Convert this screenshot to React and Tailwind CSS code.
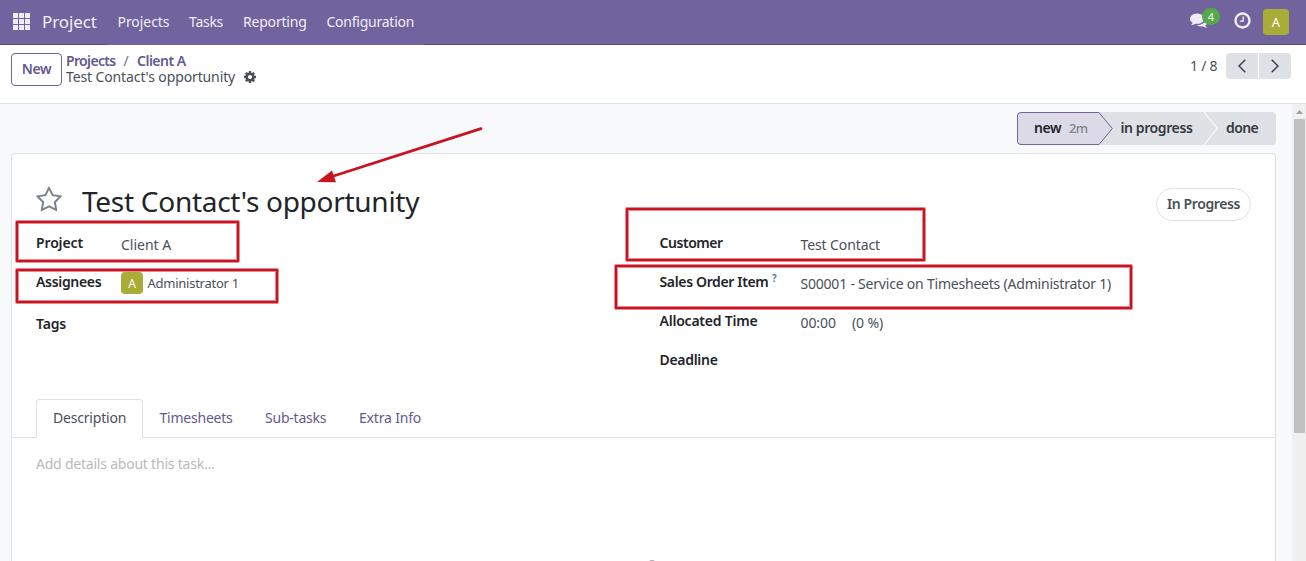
const PATHS = {
  comments:
    "M1408 768q0 139-94 257t-256.500 186.500-353.500 68.500q-86 0-176-16-124 88-278 128-36 9-86 16h-3q-11 0-20.500-8t-11.500-21q-1-3-1-6.500t.5-6.500 2-6l2.500-5 3.500-5.500 4-5 4.500-5 4-4.500q5-6 23-25t26-29.500 22.500-29 25-38.500 20.500-44q-124-72-195-177t-71-224q0-139 94-257t256.500-186.500 353.500-68.500 353.500 68.500 256.500 186.500 94 257zm384 256q0 120-71 224.500t-195 176.500q10 24 20.500 44t25 38.500 22.500 29 26 29.500 23 25q1 1 4 4.500t4.500 5 4 5 3.500 5.500l2.500 5 2 6 .5 6.500-1 6.500q-3 14-13 22t-22 7q-50-7-86-16-154-40-278-128-90 16-176 16-271 0-472-132 58 4 88 4 161 0 309-45t264-129q125-92 192-212t67-254q0-77-23-152 129 71 204 178t75 230z",
  clock:
    "M1024 544v448q0 14-9 23t-23 9h-320q-14 0-23-9t-9-23v-64q0-14 9-23t23-9h224v-352q0-14 9-23t23-9h64q14 0 23 9t9 23zm416 352q0-148-73-273t-198-198-273-73-273 73-198 198-73 273 73 273 198 198 273 73 273-73 198-198 73-273zm224 0q0 209-103 385.500t-279.500 279.500-385.500 103-385.500-103-279.500-279.500-103-385.500 103-385.500 279.500-279.500 385.500-103 385.500 103 279.500 279.500 103 385.500z",
  cog: "M1152 896q0-106-75-181t-181-75-181 75-75 181 75 181 181 75 181-75 75-181zm512-109v222q0 12-8 23t-20 13l-185 28q-19 54-39 91 35 50 107 138 10 12 10 25t-9 23q-27 37-99 108t-94 71q-12 0-26-9l-138-108q-44 23-91 38-16 136-29 186-7 28-36 28h-222q-14 0-24.500-8.500t-11.500-21.500l-28-184q-49-16-90-37l-141 107q-10 9-25 9-14 0-25-11-126-114-165-168-7-10-7-23 0-12 8-23 15-21 51-66.500t54-70.500q-27-50-41-99l-183-27q-13-2-21-12.500t-8-23.500v-222q0-12 8-23t19-13l186-28q14-46 39-92-40-57-107-138-10-12-10-24 0-10 9-23 26-36 98.500-107.500t94.500-71.500q13 0 26 10l138 107q44-23 91-38 16-136 29-186 7-28 36-28h222q14 0 24.500 8.500t11.500 21.500l28 184q49 16 90 37l142-107q9-9 24-9 13 0 25 10 129 119 165 170 7 8 7 22 0 12-8 23-15 21-51 66.500t-54 70.500q26 50 41 98l183 28q13 2 21 12.500t8 23.500z",
  star: "M1201 1004l306-297-422-62-189-382-189 382-422 62 306 297-73 421 378-199 377 199zm527-357q0 22-26 48l-363 354 86 500q1 7 1 20 0 50-41 50-19 0-40-12l-449-236-449 236q-22 12-40 12-21 0-31.500-14.500t-10.500-35.500q0-6 2-20l86-500-364-354q-25-27-25-48 0-37 56-46l502-73 225-455q19-41 49-41t49 41l225 455 502 73q56 9 56 46z",
};

function Icon({ name, className }) {
  return (
    <svg viewBox="0 0 1792 1792" fill="currentColor" className={`shrink-0 ${className}`}>
      <path d={PATHS[name]} />
    </svg>
  );
}

function AppsIcon() {
  return (
    <svg viewBox="0 0 17 17" fill="currentColor" className="size-[17px] shrink-0">
      {[0, 6, 12].map((y) => [0, 6, 12].map((x) => <rect key={`${x}-${y}`} x={x} y={y} width="5" height="5" />))}
    </svg>
  );
}

function Navbar() {
  return (
    <header className="flex h-[45px] shrink-0 items-start border-b border-[#5a4f7f] bg-[#71639e] pl-[13px] pr-[17px] text-[#f0eef5]">
      <div className="mt-[13px]">
        <AppsIcon />
      </div>
      <span className="ml-3 mt-[10px] w-[66px] text-[17px] leading-6 tracking-[-0.1px]">Project</span>
      <nav className="-mb-px flex h-[45px] gap-[20px] bg-[#71639e] pl-[9.5px] pr-[10px] pt-[11px]">
        <span className="w-[51.5px] tracking-[-0.05px]">Projects</span>
        <span className="w-[34px] tracking-[-0.28px]">Tasks</span>
        <span className="w-[63.500px] tracking-[-0.2px]">Reporting</span>
        <span className="w-[87px] tracking-[-0.24px]">Configuration</span>
      </nav>
      <div className="relative ml-auto mt-[11px]">
        <Icon name="comments" className="size-[18px]" />
        <span className="absolute -top-[3px] left-[12px] flex h-[17px] w-[18px] items-center justify-center rounded-full bg-[#55a947] text-[11px] leading-none text-white">
          4
        </span>
      </div>
      <Icon name="clock" className="ml-[25px] mt-[11px] size-[19px]" />
      <span className="ml-[11px] mt-[9px] flex size-[26px] items-center justify-center rounded-[4px] bg-[#a9ac36] text-[13px] text-white">
        A
      </span>
    </header>
  );
}

function ControlPanel() {
  return (
    <div className="flex h-[59px] shrink-0 items-start border-b border-[#dee2e6] bg-white pl-[11px] pr-[15px]">
      <button className="mt-2 flex h-[33px] w-[51px] items-center justify-center rounded-[4px] border border-[#71639e] pb-0.5 font-semibold tracking-[-0.4px] text-[#66598f]">
        New
      </button>
      <div className="ml-1 mt-2 flex flex-col leading-4">
        <div className="flex items-start font-semibold text-[#66598f]">
          <span className="w-[57.5px] tracking-[-0.65px]">Projects</span>
          <span className="w-[13.5px] font-normal text-[#6c757d]">/</span>
          <span className="tracking-[-0.5px]">Client A</span>
        </div>
        <div className="flex items-start text-[#495057]">
          <span className="w-[176.500px] tracking-[-0.12px]">Test Contact's opportunity</span>
          <Icon name="cog" className="mt-px size-[14px] text-[#495057]" />
        </div>
      </div>
      <span className="ml-auto mt-[10px] w-9 tracking-[-0.25px] text-[#495057]">1 / 8</span>
      <div className="mt-2 flex gap-px text-[#374151]">
        <button className="flex h-[26px] w-8 items-center justify-center rounded-l-[4px] bg-[#dee2e6]">
          <svg viewBox="0 0 8 14" className="h-[14px] w-2" fill="none" stroke="currentColor" strokeWidth="1.5">
            <path d="M7.300 .7 1 7l6.300 6.300" />
          </svg>
        </button>
        <button className="flex h-[26px] w-8 items-center justify-center rounded-r-[4px] bg-[#dee2e6]">
          <svg viewBox="0 0 8 14" className="h-[14px] w-2" fill="none" stroke="currentColor" strokeWidth="1.5">
            <path d="M.7 .7 7 7 .7 13.300" />
          </svg>
        </button>
      </div>
    </div>
  );
}

function StatusBar() {
  return (
    <div className="ml-auto flex h-[33px] w-[259px] overflow-hidden rounded-[4px] bg-[#dee2e6] font-semibold text-[#343a40]">
      <div className="flex w-[82px] items-start rounded-l-[4px] border-y border-l border-[#71639e] bg-[#dddae8] pl-4 pt-1 text-[#212529]">
        <span className="w-[35px] tracking-[-0.38px]">new</span>
        <span className="pt-px text-[13px] font-medium tracking-[-0.7px] text-[#7d848b]">2m</span>
      </div>
      <svg viewBox="0 0 14 33" className="h-[33px] w-[14px]">
        <path d="M0 0 13.500 16.500 0 33z" fill="#dddae8" />
        <path d="M-.5.5H0L13.300 16.500 0 32.500H-.5" fill="none" stroke="#71639e" />
      </svg>
      <span className="w-[91px] pl-[7.500px] pt-[5px] tracking-[-0.4px]">in progress</span>
      <svg viewBox="0 0 14 33" className="h-[33px] w-[14px]">
        <path d="M0 0 13.300 16.500 0 33" fill="none" stroke="#f8f9fa" strokeWidth="1.2" />
      </svg>
      <span className="pl-2 pt-[5px] tracking-[-0.6px]">done</span>
    </div>
  );
}

const label = "shrink-0 font-semibold text-[#212529]";
const value = "mt-[2px] text-[#495057]";

function TaskFields() {
  return (
    <div className="flex pl-6 pt-[9px]">
      <div className="w-[623.5px]">
        <div className="flex h-[39px]">
          <span className={`${label} w-[85px] tracking-[-0.14px]`}>Project</span>
          <span className={value}>Client A</span>
        </div>
        <div className="flex h-[42px]">
          <span className={`${label} w-[85px] tracking-[-0.32px]`}>Assignees</span>
          <span className="mt-px flex size-[22px] items-center justify-center rounded-[4px] bg-[#a9ac36] text-[12px] text-white">
            A
          </span>
          <span className="ml-[4.500px] mt-[2px] text-[13px] tracking-[-0.25px] text-[#495057]">Administrator 1</span>
        </div>
        <span className={`${label} tracking-[-0.2px]`}>Tags</span>
      </div>
      <div>
        <div className="flex h-[39px]">
          <span className={`${label} w-[141px] tracking-[-0.45px]`}>Customer</span>
          <span className={`${value} tracking-[-0.1px]`}>Test Contact</span>
        </div>
        <div className="flex h-[39px]">
          <span className={`${label} w-[112.500px] tracking-[-0.35px]`}>Sales Order Item</span>
          <span className="-mt-px w-[28.500px] text-[10px] font-semibold leading-4 text-[#1b7fa6]">?</span>
          <span className={`${value} tracking-[-0.21px]`}>S00001 - Service on Timesheets (Administrator 1)</span>
        </div>
        <div className="flex h-[39px]">
          <span className={`${label} w-[141px] tracking-[-0.22px]`}>Allocated Time</span>
          <span className={`${value} w-[51.500px] tracking-[-0.1px]`}>00:00</span>
          <span className={`${value} tracking-[-0.1px]`}>(0 %)</span>
        </div>
        <span className={`${label} tracking-[-0.3px]`}>Deadline</span>
      </div>
    </div>
  );
}

function Notebook() {
  return (
    <>
      <div className="mt-[29px] flex border-b border-[#dee2e6] pl-6 text-[#66598f]">
        <span className="-mb-px h-[39px] w-[107px] rounded-t-[4px] border border-b-0 border-[#dee2e6] bg-white pl-4 pt-[7px] tracking-[-0.2px] text-[#495057]">
          Description
        </span>
        <span className="w-[106px] pl-[16.500px] pt-2 tracking-[-0.22px]">Timesheets</span>
        <span className="w-[94px] pl-4 pt-2 tracking-[-0.22px]">Sub-tasks</span>
        <span className="pl-4 pt-2 tracking-[-0.18px]">Extra Info</span>
      </div>
      <p className="pl-6 pt-[15px] tracking-[-0.22px] text-[#b8bbbe]">Add details about this task...</p>
    </>
  );
}

function Callouts() {
  const boxes = [
    [17, 222, 221, 39],
    [17, 270, 260, 32],
    [627, 209, 297, 51],
    [616, 266, 515, 42],
  ];
  return (
    <svg viewBox="0 0 1306 561" className="pointer-events-none absolute left-0 top-0 h-[561px] w-[1306px]">
      {boxes.map(([x, y, w, h]) => (
        <g key={`${x}-${y}`} fill="none" stroke="#c81420" strokeLinejoin="round">
          <rect x={x} y={y} width={w} height={h} strokeWidth="4" strokeOpacity="0.5" />
          <rect x={x} y={y} width={w} height={h} strokeWidth="2" />
        </g>
      ))}
      <path d="M481 128.700 332 176.500" stroke="#c81420" strokeWidth="2.800" strokeLinecap="round" />
      <path d="M317 182 332 170.500 336 182.300z" fill="#c81420" />
    </svg>
  );
}

export default function App() {
  return (
    <div className="relative flex h-[561px] w-[1306px] flex-col overflow-hidden whitespace-nowrap bg-white font-['Noto_Sans',sans-serif] text-[14px] leading-[21px]">
      <Navbar />
      <ControlPanel />
      <div className="flex min-h-0 flex-1">
        <main className="flex flex-1 flex-col bg-[#f8f9fa] pl-[11px] pr-4 pt-2">
          <StatusBar />
          <section className="mt-2 flex flex-1 flex-col overflow-hidden rounded-t-[4px] border border-b-0 border-[#dee2e6] bg-white">
            <div className="flex h-[69px] items-start pl-[23px] pr-6">
              <Icon name="star" className="mt-8 size-7 text-[#7b838c]" />
              <h1 className="ml-[19px] mt-[26px] text-[28px] leading-[42px] tracking-[-0.28px] text-[#212529]">
                Test Contact's opportunity
              </h1>
              <span className="ml-auto mt-[34px] flex h-[33px] w-[95px] justify-center rounded-full border border-[#dee2e6] pt-1 font-semibold tracking-[-0.4px] text-[#495057]">
                In Progress
              </span>
            </div>
            <TaskFields />
            <Notebook />
            <div className="mt-auto flex justify-center">
              <div className="-mb-[9px] ml-[17px] size-[10px] rounded-full bg-[#b8a3b4]" />
            </div>
          </section>
        </main>
        <div className="flex w-[14px] flex-col items-center bg-[#f0f0f0]">
          <svg viewBox="0 0 14 15" className="h-[15px] w-[14px]">
            <path d="M4 10 7.500 6 11 10z" fill="#a0a0a0" />
          </svg>
          <div className="ml-px h-[314px] w-[11px] bg-[#c1c1c1]" />
        </div>
      </div>
      <Callouts />
    </div>
  );
}
